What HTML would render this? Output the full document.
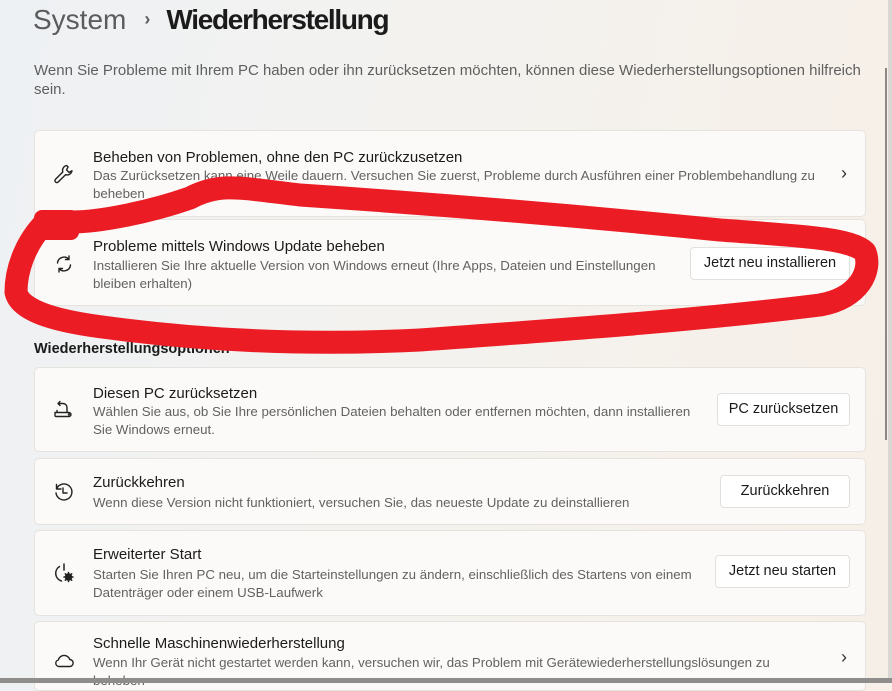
<!DOCTYPE html>
<html><head><meta charset="utf-8"><style>
*{margin:0;padding:0;box-sizing:border-box}
body{width:892px;height:683px;overflow:hidden;background:linear-gradient(100deg,#eef1f4 0%,#f4f2ee 50%,#f6efe7 100%);font-family:"Segoe UI","Liberation Sans",sans-serif;color:#1b1b1b;position:relative}
.h{position:absolute;left:33px;top:4px;font-size:28px;font-weight:600}
.h .s{color:#5c5c5c;font-weight:400}
.h .c{color:#5c5c5c;font-size:18px;margin:0 16px 0 18px;position:relative;top:-4px}
.h .w{letter-spacing:-1.3px}
.intro{position:absolute;left:34px;top:61px;width:830px;font-size:15px;line-height:19px;color:#5f5f5f}
.card{position:absolute;left:34px;width:832px;background:#fbfaf8;border:1px solid #e6e3df;border-radius:5px}
.ic{position:absolute;left:17px;width:24px;height:24px}
.t{position:absolute;left:58px;font-size:15px;color:#1b1b1b}
.d{position:absolute;left:58px;font-size:13.3px;line-height:18px;color:#626262;width:600px}
.btn{position:absolute;right:15px;height:33px;background:#fff;border:1px solid #e2e0dd;border-radius:4px;font-size:14.5px;line-height:31px;text-align:center}
.chev{position:absolute;right:18px;font-size:18px;color:#333}
.sec{position:absolute;left:34px;top:341px;font-size:14.5px;font-weight:600}
.sb{position:absolute;left:885px;top:68px;width:2px;height:372px;background:#8a8784}
.frame{position:absolute;left:888px;top:0;width:4px;height:683px;background:#d9d6d3}
.bot{position:absolute;left:0;top:678px;width:892px;height:5px;background:#8f8d8b}
</style></head><body>
<div class="h"><span class="s">System</span><span class="c">›</span><span class="w">Wiederherstellung</span></div>
<div class="intro">Wenn Sie Probleme mit Ihrem PC haben oder ihn zurücksetzen möchten, können diese Wiederherstellungsoptionen hilfreich sein.</div>

<div class="card" style="top:130px;height:87px">
<svg class="ic" style="top:31px" viewBox="0 0 24 24" fill="none" stroke="#222" stroke-width="1.4" stroke-linejoin="round"><path d="M14.5 3.5a5 5 0 0 0-3.7 6.5L3.5 17.3a1.9 1.9 0 0 0 2.7 2.7l7.3-7.3A5 5 0 0 0 20 8.8l-3 1.6-2.5-2.5 1.6-3a5 5 0 0 0-1.6-1.4z"/></svg>
<div class="t" style="top:18px">Beheben von Problemen, ohne den PC zurückzusetzen</div>
<div class="d" style="top:36px;width:725px">Das Zurücksetzen kann eine Weile dauern. Versuchen Sie zuerst, Probleme durch Ausführen einer Problembehandlung zu beheben</div>
<div class="chev" style="top:32px">›</div>
</div>

<div class="card" style="top:219px;height:87px">
<svg class="ic" style="top:32px" viewBox="0 0 24 24" fill="none" stroke="#222" stroke-width="1.4" stroke-linecap="round"><path d="M5.5 11a6.5 6.5 0 0 1 11.5-3.5M18.5 13a6.5 6.5 0 0 1-11.5 3.5M17 4v3.5h-3.5M7 20v-3.5h3.5"/></svg>
<div class="t" style="top:18px">Probleme mittels Windows Update beheben</div>
<div class="d" style="top:37px">Installieren Sie Ihre aktuelle Version von Windows erneut (Ihre Apps, Dateien und Einstellungen bleiben erhalten)</div>
<div class="btn" style="top:27px;width:160px">Jetzt neu installieren</div>
</div>

<div class="sec">Wiederherstellungsoptionen</div>

<div class="card" style="top:367px;height:85px">
<svg class="ic" style="top:29px" viewBox="0 0 24 24" fill="none" stroke="#222" stroke-width="1.4" stroke-linecap="round" stroke-linejoin="round"><path d="M3 15.5h14a2 2 0 0 1 0 4H4a1 1 0 0 1-1-1zM5 15.5v-2M8 4.5l-2 2 2 2M6 6.5h5a4 4 0 0 1 4 4v5"/><circle cx="17" cy="17.5" r=".5"/></svg>
<div class="t" style="top:17px">Diesen PC zurücksetzen</div>
<div class="d" style="top:35px;width:615px">Wählen Sie aus, ob Sie Ihre persönlichen Dateien behalten oder entfernen möchten, dann installieren Sie Windows erneut.</div>
<div class="btn" style="top:25px;width:133px">PC zurücksetzen</div>
</div>

<div class="card" style="top:458px;height:67px">
<svg class="ic" style="top:21px" viewBox="0 0 24 24" fill="none" stroke="#222" stroke-width="1.4" stroke-linecap="round" stroke-linejoin="round"><path d="M4.5 9A8 8 0 1 1 4 13M4.5 4.5V9H9M11 8v5h4"/></svg>
<div class="t" style="top:15px">Zurückkehren</div>
<div class="d" style="top:35px">Wenn diese Version nicht funktioniert, versuchen Sie, das neueste Update zu deinstallieren</div>
<div class="btn" style="top:16px;width:130px">Zurückkehren</div>
</div>

<div class="card" style="top:530px;height:86px">
<svg class="ic" style="top:30px" viewBox="0 0 24 24" fill="none" stroke="#222" stroke-width="1.5" stroke-linecap="round"><path d="M12 3v6M7.5 5.5a8 8 0 0 0 2 14.5"/><circle cx="16.5" cy="16" r="3" fill="#222"/><path d="M16.5 11.5v9M12 16h9M13.3 12.8l6.4 6.4M19.7 12.8l-6.4 6.4"/></svg>
<div class="t" style="top:15px">Erweiterter Start</div>
<div class="d" style="top:35px">Starten Sie Ihren PC neu, um die Starteinstellungen zu ändern, einschließlich des Startens von einem Datenträger oder einem USB-Laufwerk</div>
<div class="btn" style="top:24px;width:135px">Jetzt neu starten</div>
</div>

<div class="card" style="top:621px;height:70px">
<svg class="ic" style="top:26px" viewBox="0 0 24 24" fill="none" stroke="#222" stroke-width="1.4" stroke-linejoin="round"><path d="M7 18.5h10.5a3.5 3.5 0 0 0 .3-7A6 6 0 0 0 6.3 12 3.3 3.3 0 0 0 7 18.5z"/></svg>
<div class="t" style="top:13px">Schnelle Maschinenwiederherstellung</div>
<div class="d" style="top:32px;width:690px">Wenn Ihr Gerät nicht gestartet werden kann, versuchen wir, das Problem mit Gerätewiederherstellungslösungen zu beheben</div>
<div class="chev" style="top:25px">›</div>
</div>

<div class="sb"></div>
<div class="frame"></div>
<div class="bot"></div>

<svg style="position:absolute;left:0;top:0" width="892" height="683" viewBox="0 0 892 683">
<path d="M72 222 L42 226 C25 245 16 270 16 292 C20 312 60 322 110 328 C200 340 300 346 420 340 C560 330 700 320 820 305 C860 298 872 270 865 252 C850 238 800 236 720 230 C600 218 450 205 300 195 C240 188 220 182 190 198 C150 212 100 222 72 222 Z" fill="none" stroke="#ec1c24" stroke-width="23" stroke-linejoin="round"/>
<rect x="34" y="210" width="45" height="30" rx="8" fill="#ec1c24"/>
</svg>
</body></html>
